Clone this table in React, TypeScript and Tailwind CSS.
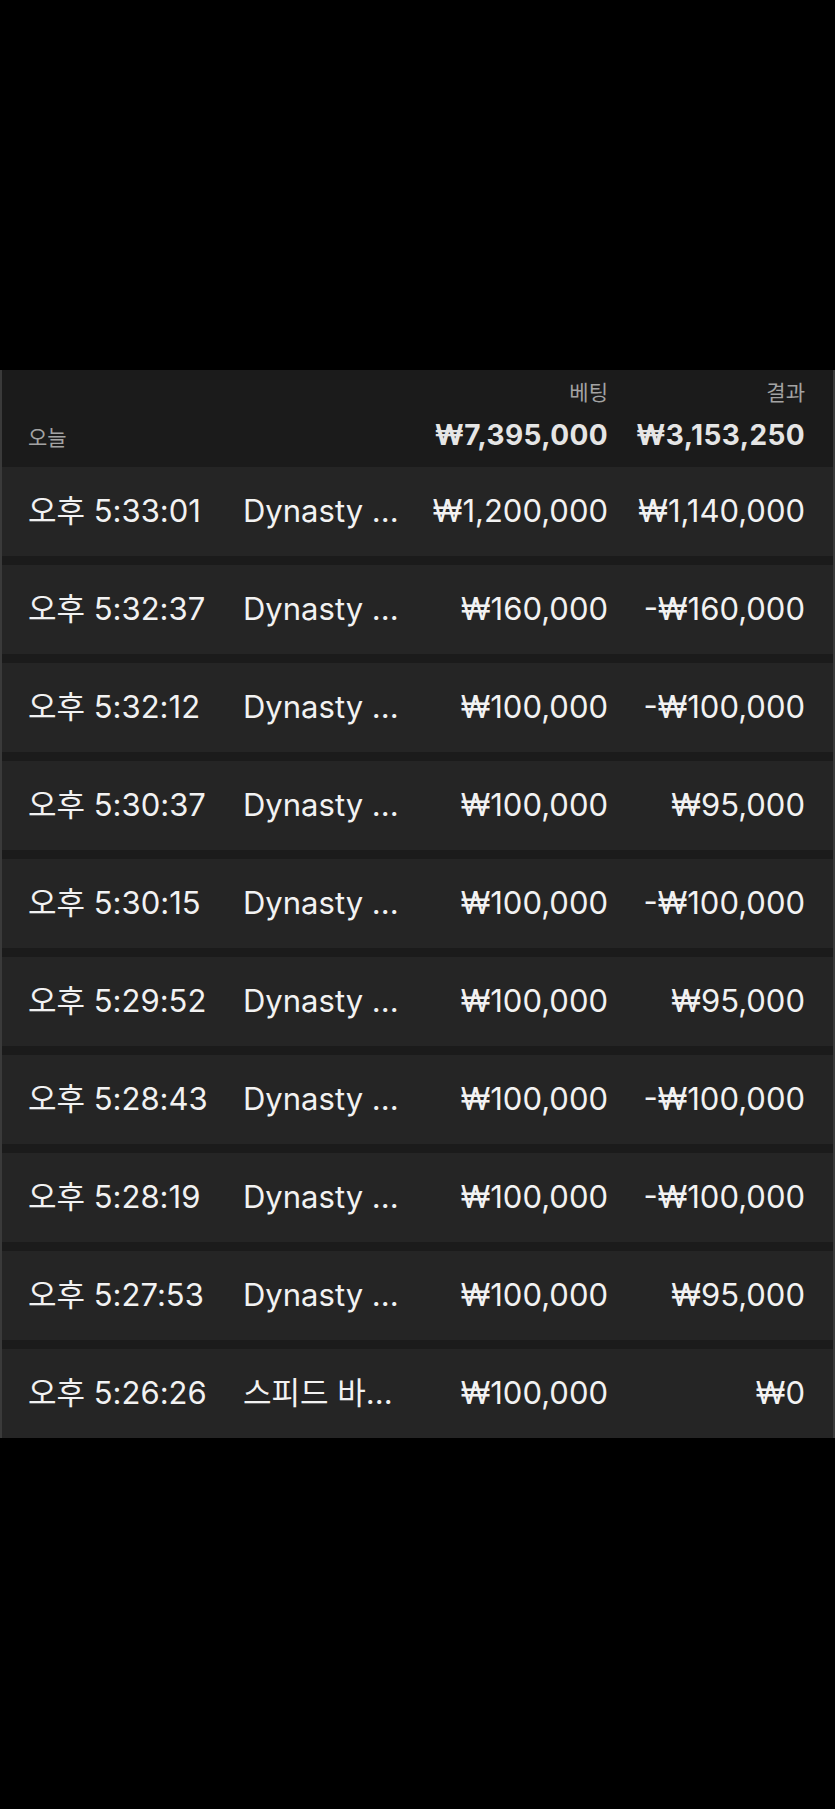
import React from "react";

const rows: [string, string, string, string][] = [
  ["오후 5:33:01", "Dynasty ...", "₩1,200,000", "₩1,140,000"],
  ["오후 5:32:37", "Dynasty ...", "₩160,000", "-₩160,000"],
  ["오후 5:32:12", "Dynasty ...", "₩100,000", "-₩100,000"],
  ["오후 5:30:37", "Dynasty ...", "₩100,000", "₩95,000"],
  ["오후 5:30:15", "Dynasty ...", "₩100,000", "-₩100,000"],
  ["오후 5:29:52", "Dynasty ...", "₩100,000", "₩95,000"],
  ["오후 5:28:43", "Dynasty ...", "₩100,000", "-₩100,000"],
  ["오후 5:28:19", "Dynasty ...", "₩100,000", "-₩100,000"],
  ["오후 5:27:53", "Dynasty ...", "₩100,000", "₩95,000"],
  ["오후 5:26:26", "스피드 바...", "₩100,000", "₩0"],
];

const font = {
  fontFamily: "Inter, 'Noto Sans CJK KR', 'Noto Sans', sans-serif",
};

export default function App() {
  return (
    <div className="min-h-[1809px] w-[835px] bg-black pt-[370px]" style={font}>
      <div className="border-x-2 border-[#3a3a3a] bg-[#1b1b1b]">
        <div className="h-[97px] pl-[26px] pr-[28px] pt-[10px]">
          <div className="grid grid-cols-[375px_1fr_197px] text-[21px] leading-[26px] text-[#a3a3a3]">
            <div />
            <div className="text-right">베팅</div>
            <div className="text-right">결과</div>
          </div>
          <div className="mt-[13px] grid grid-cols-[375px_1fr_197px] items-baseline leading-[32px]">
            <div className="text-[21px] text-[#a3a3a3]">오늘</div>
            <div className="text-right text-[28px] font-bold tracking-[0.4px] text-[#e5e5e5]">₩7,395,000</div>
            <div className="text-right text-[28px] font-bold tracking-[0.4px] text-[#e5e5e5]">₩3,153,250</div>
          </div>
        </div>
        <div className="flex flex-col gap-[9px]">
          {rows.map((r, i) => (
            <div
              key={i}
              className="grid h-[89px] grid-cols-[215px_160px_1fr_197px] items-center bg-[#252525] pl-[26px] pr-[28px] text-[31px] text-[#f2f2f2]"
            >
              <div className="whitespace-nowrap">{r[0]}</div>
              <div className="whitespace-nowrap">{r[1]}</div>
              <div className="whitespace-nowrap text-right">{r[2]}</div>
              <div className="whitespace-nowrap text-right">{r[3]}</div>
            </div>
          ))}
        </div>
      </div>
    </div>
  );
}
